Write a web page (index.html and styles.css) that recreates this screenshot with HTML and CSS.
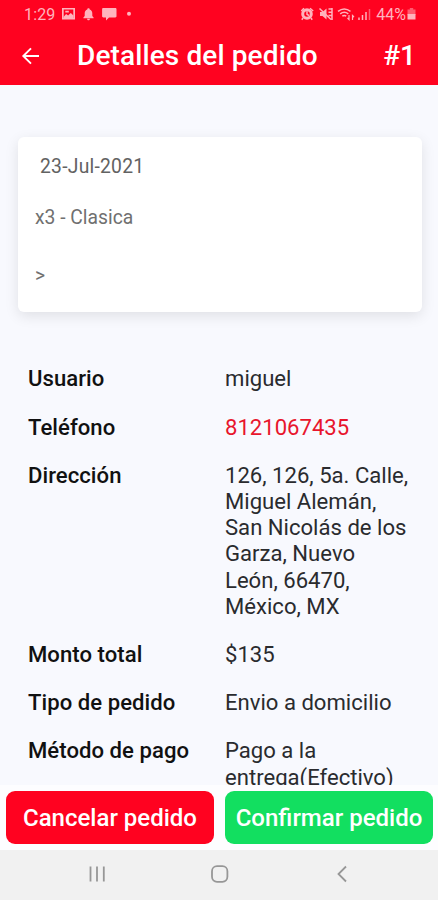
FILE: index.html
```html
<!DOCTYPE html>
<html lang="es">
<head>
<meta charset="utf-8">
<title>Detalles del pedido</title>
<link rel="stylesheet" href="styles.css">
</head>
<body>
<div class="screen">
  <header class="top">
    <div class="status">
      <span class="time">1:29</span>
      <svg class="s-left" width="74" height="16" viewBox="0 0 74 16" fill="currentColor">
        <path fill-rule="evenodd" d="M1 2h13v11.600H1zM2.700 3.500v8.600h9.600V3.500z"/>
        <path d="M2.500 11l2.600-3 2 1.500 2.700-2.500 2.700 2.500V12.500h-10zM4.300 4.800h3.500v1.800H4.300z"/>
        <path d="M27.500 2.200c.8 0 1.200.5 1.200 1.200 1.700.6 2.600 2 2.600 4v2.700l1.300 1.400v.7H22.400v-.7l1.300-1.400V7.400c0-2 .9-3.400 2.600-4 0-.7.400-1.200 1.200-1.200zM26 12.800h3c0 .9-.6 1.500-1.500 1.500s-1.500-.6-1.500-1.500z"/>
        <path d="M42.300 2h12c.7 0 1.200.5 1.200 1.200v7c0 .7-.5 1.200-1.200 1.200H48l-3 3v-3h-2.700c-.7 0-1.200-.5-1.200-1.200v-7c0-.7.500-1.200 1.200-1.200z"/>
        <circle cx="68" cy="7.800" r="2"/>
      </svg>
      <svg class="s-right" width="72" height="16" viewBox="0 0 72 16" fill="none" stroke="currentColor" stroke-width="1.500">
        <circle cx="6" cy="8" r="4.300" stroke-width="3"/>
        <path d="M6 5.200V8.300l2 1.200M.3 5L3 2.200M12.200 5L9 2.200M2 12L.8 13.700M10 12l1.200 1.700"/>
        <path d="M19 6h2.500l4-3.500v11L21.500 10H19z" fill="currentColor" stroke="none"/>
        <path d="M18.500 2.500l11.500 11M27.500 3h3M27.500 6.200h3M27.500 9.400h3M31 2v12" />
        <path d="M37 5.300c4-3 8.500-3 12.500 0M39.200 7.800c2.600-2 5.500-2 8.100 0M41.300 10.200c1.300-1 2.600-1 3.900 0"/>
        <path d="M48 9v4.500l-1.500-1.500M51.500 14V9.500l1.500 1.500" stroke-width="1.200"/>
        <path d="M58 14v-2.500M61.500 14V9M65 14V6" stroke-width="1.500"/><path d="M68.500 14V3" opacity=".5"/>
      </svg>
      <span class="pct">44%</span>
      <svg class="batt" width="9" height="14" viewBox="0 0 9 14" fill="currentColor">
        <path opacity=".5" d="M2.800 1h3.400v1.500H8.500V8h-8V2.500h2.300z"/><path d="M.5 7h8v5.500h-8z"/>
      </svg>
    </div>
    <div class="bar">
      <svg class="back" width="20" height="20" viewBox="0 0 20 20" fill="none" stroke="currentColor" stroke-width="1.900"><path d="M18 10H2.600M10 2.400L2.300 10l7.700 7.600"/></svg>
      <h1 class="title">Detalles del pedido</h1>
      <span class="num">#1</span>
    </div>
  </header>
  <main class="content">
    <section class="card">
      <p class="date">23-Jul-2021</p>
      <p class="item">x3 - Clasica</p>
      <p class="more">&gt;</p>
    </section>
    <dl class="details">
      <dt>Usuario</dt><dd>miguel</dd>
      <dt>Teléfono</dt><dd class="phone">8121067435</dd>
      <dt>Dirección</dt><dd>126, 126, 5a. Calle,<br>Miguel Alemán,<br>San Nicolás de los<br>Garza, Nuevo<br>León, 66470,<br>México, MX</dd>
      <dt>Monto total</dt><dd>$135</dd>
      <dt>Tipo de pedido</dt><dd>Envio a domicilio</dd>
      <dt>Método de pago</dt><dd>Pago a la<br>entrega(Efectivo)</dd>
    </dl>
  </main>
  <footer class="actions">
    <button class="btn cancel">Cancelar pedido</button>
    <button class="btn confirm">Confirmar pedido</button>
  </footer>
  <nav class="nav">
    <svg width="20" height="20" viewBox="0 0 20 20" fill="none" stroke="currentColor" stroke-width="1.800"><path d="M3.500 2.500v15M10 2.500v15M16.800 2.500v15"/></svg>
    <svg width="20" height="20" viewBox="0 0 20 20" fill="none" stroke="currentColor" stroke-width="1.800"><rect x="2" y="2.200" width="15.400" height="15.600" rx="5"/></svg>
    <svg width="20" height="20" viewBox="0 0 20 20" fill="none" stroke="currentColor" stroke-width="1.800"><path d="M14 2.500L6.500 10l7.500 7.500"/></svg>
  </nav>
</div>
</body>
</html>
```
FILE: styles.css
```css
* { box-sizing: border-box; margin: 0; padding: 0; }
body { font-family: Roboto, "Liberation Sans", sans-serif; background: #f8f9fe; }
.screen { width: 438px; height: 900px; display: flex; flex-direction: column; overflow: hidden; }
.top { height: 85px; flex: none; background: #ff0220; color: #fff; }
.status { height: 28px; padding: 0 22px 0 24px; display: flex; align-items: center; color: #ffb3bd; font-size: 16px; letter-spacing: 0; }
.time { width: 37px; letter-spacing: .15px; }
.s-right { margin-left: auto; margin-right: 3px; }
.batt { margin-left: 1px; }
.bar { height: 56px; padding: 0 22px 0 21px; display: flex; align-items: center; }
.title, .num { font-size: 28px; font-weight: 500; line-height: 32px; }
.title { margin-left: 36px; letter-spacing: .12px; }
.num { margin-left: auto; }
.content { flex: 1; min-height: 0; overflow: hidden; padding: 52px 16px 0 18px; }
.card { height: 175px; border-radius: 6px; background: #fff; box-shadow: 0 4px 14px rgba(0,0,0,.1); padding: 18px 17px; color: #707070; font-size: 19.300px; line-height: 24px; }
.date { padding-left: 5px; letter-spacing: .25px; color: #626262; }
.item { margin-top: 27px; }
.more { margin-top: 34px; }
.details { margin: 53.400px 0 0 10px; display: grid; grid-template-columns: 197px 1fr; row-gap: 22px; font-size: 22.100px; line-height: 26.200px; color: #2a2b2e; white-space: nowrap; }
dt { font-weight: 500; color: #111; letter-spacing: .05px; }
.phone { color: #e8152c; }
.actions { height: 65px; flex: none; background: #fdfdff; padding: 6px 5px 6px 6px; display: grid; grid-template-columns: 1fr 1fr; gap: 11px; }
.btn { border: 0; border-radius: 9px; color: #fff; font: 500 24px Roboto, sans-serif; white-space: nowrap; }
.cancel { background: #ff0220; }
.confirm { background: #12df60; }
.nav { height: 50px; flex: none; background: #f1f1f1; color: #979797; display: flex; justify-content: space-between; align-items: center; padding: 0 86px 2px 87px; }
```
